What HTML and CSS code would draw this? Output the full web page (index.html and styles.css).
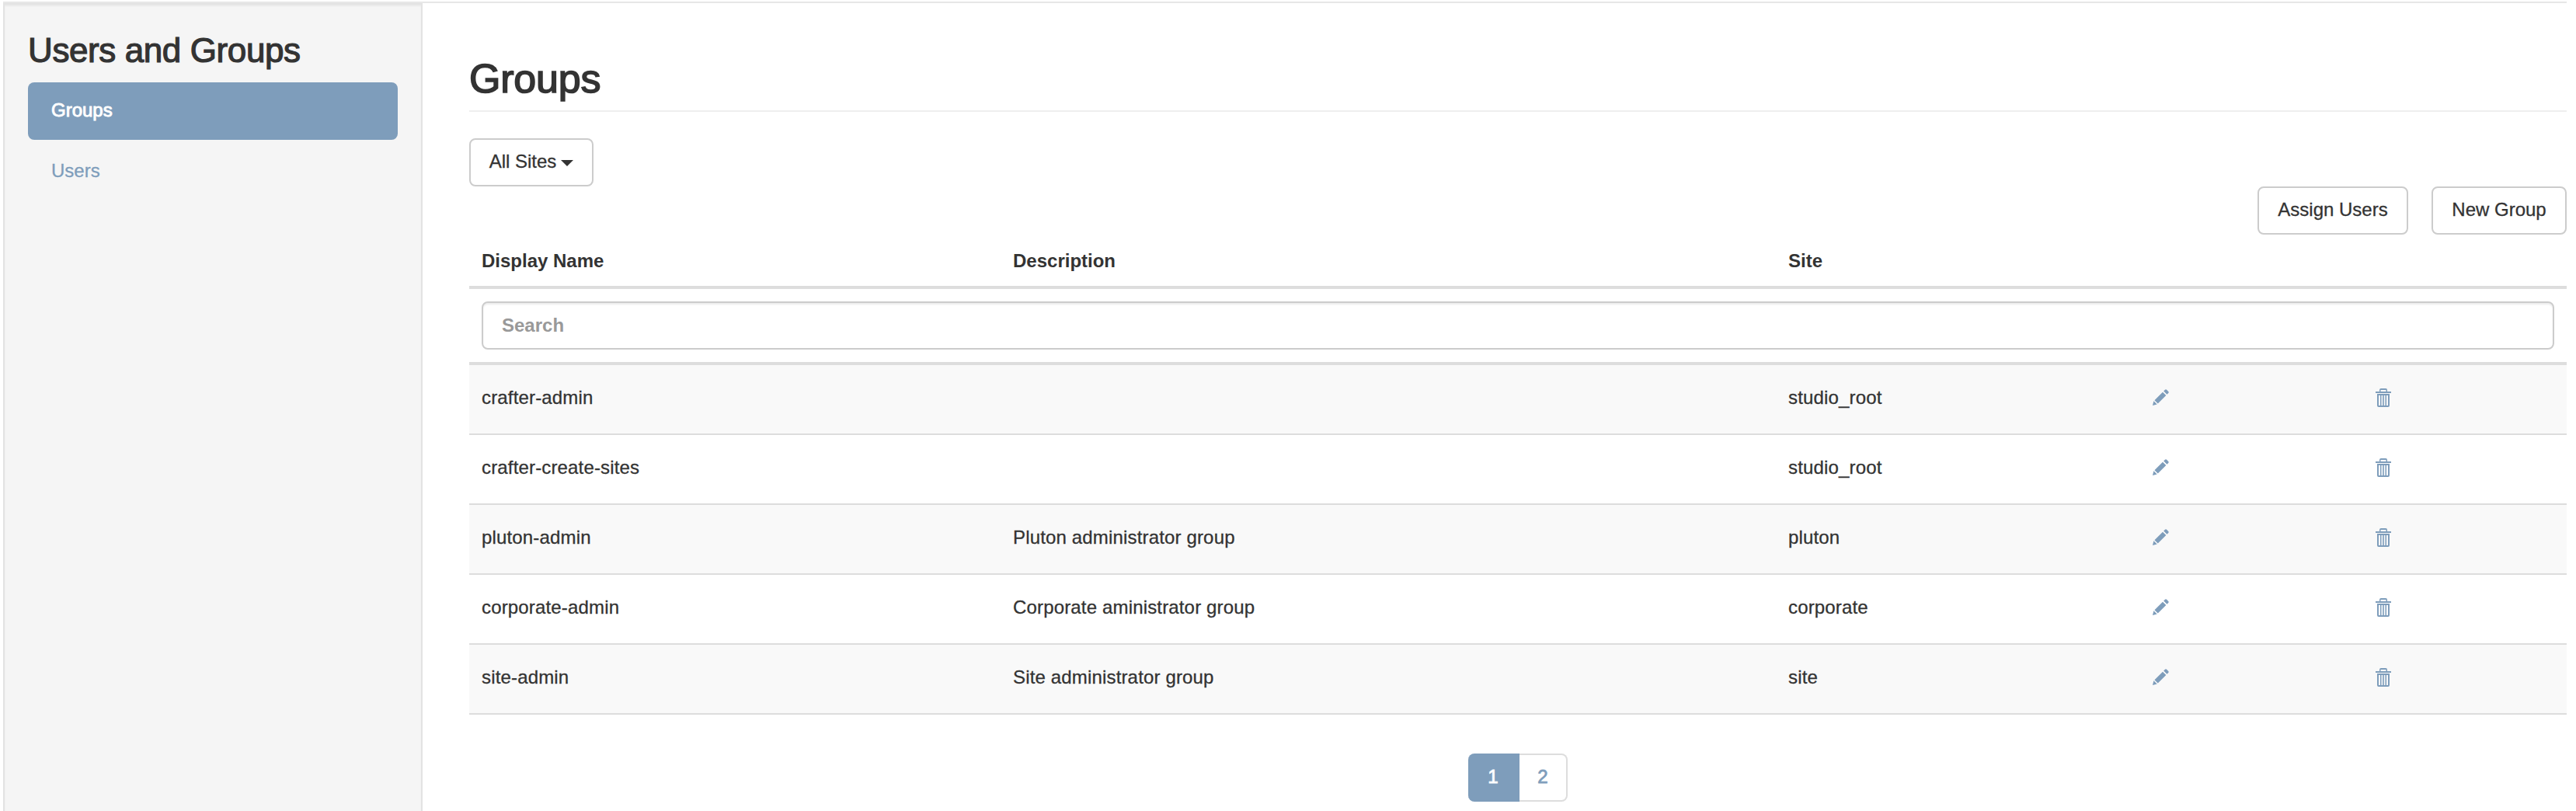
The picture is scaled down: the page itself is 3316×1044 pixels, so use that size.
FILE: index.html
```html
<!DOCTYPE html>
<html lang="en">
<head>
<meta charset="utf-8">
<title>Users and Groups</title>
<link rel="stylesheet" href="styles.css">
</head>
<body>
<svg class="sprite" aria-hidden="true">
  <symbol id="pencil" viewBox="0 0 24 24">
    <path d="M1 23l1.500-6 4.500 4.500zM3.600 15.900L14.600 4.900l4.500 4.500L8.100 20.400zM15.800 3.700l1.900-1.900q1.100-1 2.200 0l2.300 2.300q1 1.100 0 2.200l-1.900 1.900z"/>
  </symbol>
  <symbol id="trash" viewBox="0 0 20 24">
    <path fill-rule="evenodd" d="M5 4V2q0-2 2-2h6q2 0 2 2v2h5v2H0V4zM6.500 4h7V2h-7zM2 7h16v15q0 2-2 2H4q-2 0-2-2zM4 9v13h2V9zM7.500 9v13h1.700V9zM10.800 9v13h1.700V9zM14 9v13h2V9z"/>
  </symbol>
</svg>
<div class="page">
  <aside class="sidebar">
    <h3 class="sidebar-title">Users and Groups</h3>
    <nav class="nav">
      <a class="nav-item active">Groups</a>
      <a class="nav-item">Users</a>
    </nav>
  </aside>
  <main class="main">
    <h1 class="page-title">Groups</h1>
    <button class="btn filter"><span>All Sites</span><i class="caret"></i></button>
    <div class="actions">
      <button class="btn assign">Assign Users</button>
      <button class="btn create">New Group</button>
    </div>
    <table class="table">
      <colgroup><col class="c-name"><col class="c-desc"><col class="c-site"><col class="c-edit"><col class="c-del"></colgroup>
      <thead>
        <tr class="labels"><th>Display Name</th><th>Description</th><th>Site</th><th></th><th></th></tr>
        <tr class="search-row"><th colspan="5"><input class="search" placeholder="Search"></th></tr>
      </thead>
      <tbody>
        <tr><td>crafter-admin</td><td></td><td>studio_root</td><td><svg class="pencil"><use href="#pencil"/></svg></td><td><svg class="trash"><use href="#trash"/></svg></td></tr>
        <tr><td>crafter-create-sites</td><td></td><td>studio_root</td><td><svg class="pencil"><use href="#pencil"/></svg></td><td><svg class="trash"><use href="#trash"/></svg></td></tr>
        <tr><td>pluton-admin</td><td>Pluton administrator group</td><td>pluton</td><td><svg class="pencil"><use href="#pencil"/></svg></td><td><svg class="trash"><use href="#trash"/></svg></td></tr>
        <tr><td>corporate-admin</td><td>Corporate aministrator group</td><td>corporate</td><td><svg class="pencil"><use href="#pencil"/></svg></td><td><svg class="trash"><use href="#trash"/></svg></td></tr>
        <tr><td>site-admin</td><td>Site administrator group</td><td>site</td><td><svg class="pencil"><use href="#pencil"/></svg></td><td><svg class="trash"><use href="#trash"/></svg></td></tr>
      </tbody>
    </table>
    <div class="pagination"><a class="page-link current">1</a><a class="page-link">2</a></div>
  </main>
</div>
</body>
</html>
```
FILE: styles.css
```css
* { box-sizing: border-box; }
body {
  margin: 0;
  background: #fff;
  color: #333;
  font: 24px/34px "Liberation Sans", Arial, sans-serif;
}
.sprite { display: none; }
.page {
  display: flex;
  height: 1042px;
  margin: 2px 0 0 4px;
  width: 3300px;
  border-top: 2px solid #e7e7e7;
}
.sidebar {
  width: 540px;
  padding: 31px 30px 0;
  border: 2px solid #e3e3e3;
  border-bottom: 0;
  background: #f5f5f5;
  box-shadow: inset 0 2px 2px rgba(0, 0, 0, .05);
}
.sidebar-title {
  margin: 0 0 13px;
  font-size: 44px;
  font-weight: 400;
  letter-spacing: -.4px;
  line-height: 56px;
  -webkit-text-stroke: 1.200px #333;
  white-space: nowrap;
}
.nav { display: flex; flex-direction: column; gap: 4px; }
.nav-item {
  height: 74px;
  padding: 19px 30px;
  border-radius: 8px;
  color: #7e9dbb;
  -webkit-text-stroke: .3px currentColor;
}
.nav-item.active { background: #7e9dbb; color: #fff; -webkit-text-stroke: .9px #fff; }
.main { width: 2700px; margin-left: 60px; }
.page-title {
  height: 140px;
  margin: 0 0 34px;
  padding-top: 67px;
  border-bottom: 2px solid #eee;
  font-size: 52px;
  font-weight: 400;
  letter-spacing: -.2px;
  line-height: 60px;
  -webkit-text-stroke: 1.600px #333;
}
.btn {
  display: flex;
  align-items: center;
  justify-content: center;
  height: 62px;
  padding: 0 0 2px;
  border: 2px solid #ccc;
  border-radius: 8px;
  background: #fff;
  color: #333;
  font: inherit;
  -webkit-text-stroke: .3px currentColor;
}
.filter { width: 160px; gap: 6px; }
.caret { border: 8px solid transparent; border-top-color: #333; border-bottom: 0; margin-top: 3px; }
.actions { display: flex; justify-content: flex-end; gap: 30px; }
.assign { width: 194px; }
.create { width: 174px; }
.table { width: 2700px; table-layout: fixed; border-collapse: separate; border-spacing: 0; }
.c-name { width: 684px; }
.c-desc { width: 998px; }
.c-site { width: 468px; }
.c-edit { width: 288px; }
.c-del { width: 262px; }
th { padding: 0 16px; text-align: left; border-bottom: 4px solid #ddd; }
.labels th { height: 70px; padding-top: 2px; }
.search-row th { height: 98px; }
.search {
  display: block;
  width: 2668px;
  height: 62px;
  padding: 0 24px;
  border: 2px solid #ccc;
  border-radius: 8px;
  background: #fff;
  box-shadow: inset 0 2px 2px rgba(0, 0, 0, .075);
  font: bold 24px "Liberation Sans", Arial, sans-serif;
}
.search::placeholder { color: #999; opacity: 1; }
td {
  height: 90px;
  padding: 0 16px 5px;
  border-bottom: 2px solid #ddd;
  vertical-align: middle;
  letter-spacing: .16px;
  -webkit-text-stroke: .3px currentColor;
}
tbody tr:nth-child(odd) { background: #f9f9f9; }
td svg { display: block; fill: #7e9dbb; -webkit-text-stroke: 0; }
.pencil { width: 23px; height: 23px; }
.trash { width: 20px; height: 24px; }
.pagination { display: flex; margin: 50px 0 0 1286px; }
.page-link {
  width: 62px;
  height: 62px;
  padding-top: 11px;
  border: 2px solid #ddd;
  border-left: 0;
  border-radius: 0 8px 8px 0;
  color: #7e9dbb;
  text-align: center;
  -webkit-text-stroke: .8px currentColor;
}
.page-link.current { width: 66px; border-color: #7e9dbb; border-radius: 8px 0 0 8px; background: #7e9dbb; color: #fff; }
```
